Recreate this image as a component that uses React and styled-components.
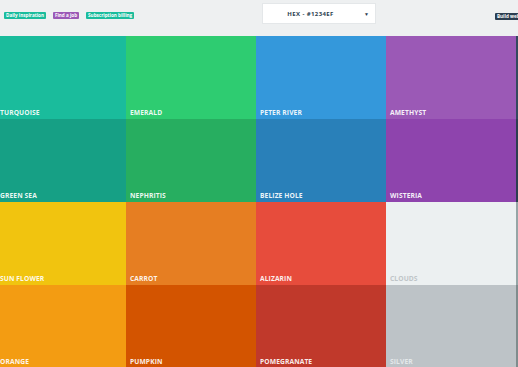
import React from "react";
import styled, { createGlobalStyle } from "styled-components";

const GlobalStyle = createGlobalStyle`
  html, body {
    margin: 0;
    padding: 0;
    background: #eef0f1;
    font-family: "Open Sans", "Liberation Sans", sans-serif;
  }
`;

// last column only peeks in at the right edge, so it carries no label
const colors = [
  ["TURQUOISE", "#1abc9c"],
  ["EMERALD", "#2ecc71"],
  ["PETER RIVER", "#3498db"],
  ["AMETHYST", "#9b59b6"],
  ["", "#34495e"],
  ["GREEN SEA", "#16a085"],
  ["NEPHRITIS", "#27ae60"],
  ["BELIZE HOLE", "#2980b9"],
  ["WISTERIA", "#8e44ad"],
  ["", "#2c3e50"],
  ["SUN FLOWER", "#f1c40f"],
  ["CARROT", "#e67e22"],
  ["ALIZARIN", "#e74c3c"],
  ["CLOUDS", "#ecf0f1", "#bfc5c8"],
  ["", "#95a5a6"],
  ["ORANGE", "#f39c12"],
  ["PUMPKIN", "#d35400"],
  ["POMEGRANATE", "#c0392b"],
  ["SILVER", "#bdc3c7", "#e4e8ea"],
  ["", "#7f8c8d"],
];

const Page = styled.div`
  width: 518px;
  height: 367px;
  overflow: hidden;
  background: #eef0f1;
`;

const TopBar = styled.div`
  height: 36px;
  display: flex;
  align-items: flex-start;
  padding-left: 4px;
  box-sizing: border-box;
  background: #eef0f1;
  white-space: nowrap;
  overflow: hidden;
`;

const Tags = styled.div`
  display: flex;
  gap: 7px;
  margin-top: 12px;
  width: 129px;
  flex-shrink: 0;
`;

const Tag = styled.span`
  display: inline-block;
  background: ${(p) => p.$bg};
  color: #fff;
  font-size: 4.6px;
  font-weight: 700;
  line-height: 7px;
  padding: 0 2px;
  border-radius: 1px;
  flex-shrink: 0;
`;

const Select = styled.div`
  margin-left: 129px;
  margin-top: 3px;
  width: 114px;
  height: 21px;
  background: #fff;
  border: 1px solid #e4e7e9;
  box-sizing: border-box;
  display: flex;
  align-items: center;
  flex-shrink: 0;
`;

const SelectText = styled.span`
  flex: 1;
  text-align: center;
  font-size: 6px;
  font-weight: 700;
  letter-spacing: 0.4px;
  color: #2c3e50;
  padding-right: 12px;
  padding-left: 6px;
`;

const Caret = styled.span`
  font-size: 5px;
  color: #2c3e50;
  margin-right: 6px;
`;

const RightTag = styled(Tag)`
  margin-left: 119px;
  margin-top: 13px;
  background: #2c3e50;
`;

const Grid = styled.div`
  display: grid;
  grid-template-columns: repeat(5, 130px);
  grid-auto-rows: 83px;
  margin-left: -4px;
`;

const Cell = styled.div`
  background: ${(p) => p.$bg};
  display: flex;
  align-items: flex-end;
  padding: 0 4px 3px;
  box-sizing: border-box;
`;

const Label = styled.span`
  color: ${(p) => p.$fg || "rgba(255,255,255,0.92)"};
  font-family: "Open Sans", "Liberation Sans", sans-serif;
  font-size: 6.7px;
  font-weight: 700;
  line-height: 7px;
  letter-spacing: 0.1px;
  white-space: nowrap;
`;

export default function App() {
  return (
    <Page>
      <GlobalStyle />
      <TopBar>
        <Tags>
          <Tag $bg="#1abc9c">Daily inspiration</Tag>
          <Tag $bg="#9b59b6">Find a job</Tag>
          <Tag $bg="#1abc9c">Subscription billing</Tag>
        </Tags>
        <Select>
          <SelectText>HEX - #1234EF</SelectText>
          <Caret>▼</Caret>
        </Select>
        <RightTag>Build website</RightTag>
      </TopBar>
      <Grid>
        {colors.map(([name, bg, fg], i) => (
          <Cell key={i} $bg={bg}>
            {name && <Label $fg={fg}>{name}</Label>}
          </Cell>
        ))}
      </Grid>
    </Page>
  );
}
